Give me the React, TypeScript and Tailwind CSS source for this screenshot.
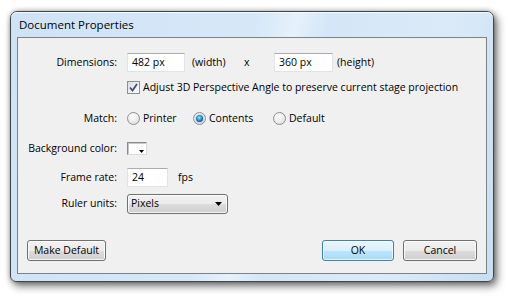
import React from 'react';

const font = { fontFamily: '"Open Sans", "Noto Sans", sans-serif' };

const TextBox: React.FC<{ value: string; w: string }> = ({ value, w }) => (
  <div className={`${w} h-[19px] bg-white border border-[#dfe4ea] border-t-[#abadb3] border-l-[#e2e3ea] pl-[4px] flex items-center text-black`}>
    {value}
  </div>
);

const Radio: React.FC<{ checked?: boolean; label: string; w: string }> = ({ checked, label, w }) => (
  <div className={`${w} flex items-center gap-[3px]`}>
    <div className="w-[13px] h-[13px] rounded-full border border-[#8e8f8f] bg-[radial-gradient(circle_at_40%_35%,#ffffff,#d9d9d9)] flex items-center justify-center">
      {checked && (
        <div className="w-[7px] h-[7px] rounded-full bg-[radial-gradient(circle_at_45%_40%,#9fe3ff,#0d6ea8_60%,#044b79)] shadow-[0_0_2px_#3c9fda]" />
      )}
    </div>
    <span>{label}</span>
  </div>
);

const Button: React.FC<{ label: string; w: string; primary?: boolean }> = ({ label, w, primary }) => (
  <div
    className={`${w} h-[21px] rounded-[3px] border flex items-center justify-center text-black ${
      primary
        ? 'border-[#3c7fb1] bg-[linear-gradient(to_bottom,#eaf6fd_0%,#d9f0fc_50%,#bee6fd_50%,#a7d9f5_100%)] shadow-[inset_0_0_0_1px_rgba(255,255,255,0.7)]'
        : 'border-[#707070] bg-[linear-gradient(to_bottom,#f2f2f2_0%,#ebebeb_50%,#dddddd_50%,#cfcfcf_100%)] shadow-[inset_0_0_0_1px_rgba(255,255,255,0.8)]'
    }`}
  >
    {label}
  </div>
);

export default function App() {
  return (
    <div className="w-[508px] h-[297px] bg-white overflow-hidden text-[10.5px] text-black whitespace-nowrap" style={font}>
      <div className="ml-[10px] mt-[11px] w-[484px] h-[271px] rounded-t-[7px] rounded-b-[6px] border border-[#3f444a] bg-[linear-gradient(105deg,#cfe3f6_0%,#d6e8f8_45%,#e6f1fb_52%,#d4e6f7_58%,#dbeaf8_80%,#c8def2_100%)] shadow-[3px_4px_9px_rgba(0,0,0,0.55),0_0_5px_rgba(0,0,0,0.3)] flex flex-col">
        <div className="h-[25px] pl-[8px] flex items-center text-[11.5px] rounded-t-[6px] shadow-[inset_0_1px_0_rgba(255,255,255,0.8)]">
          Document Properties
        </div>
        <div className="mx-[6px] h-[237px] border border-[#7d8287] bg-[#f0f0f0] pt-[15px] flex flex-col">
          {/* Dimensions */}
          <div className="flex items-center h-[19px]">
            <div className="w-[99px] text-right">Dimensions:</div>
            <div className="w-[10px]" />
            <TextBox value="482 px" w="w-[58px]" />
            <span className="ml-[7px] w-[52px]">(width)</span>
            <span className="w-[30px]">x</span>
            <TextBox value="360 px" w="w-[59px]" />
            <span className="ml-[4px]">(height)</span>
          </div>

          <div className="flex items-center h-[13px] mt-[9px] pl-[109px]">
            <div className="w-[13px] h-[13px] border border-[#8f8f8f] bg-[linear-gradient(135deg,#dcdcdc,#ffffff)] flex items-center justify-center">
              <svg width="9" height="9" viewBox="0 0 9 9">
                <path d="M1 4.5 L3.5 7.5 L8 1" fill="none" stroke="#3b4f8a" strokeWidth="1.8" />
              </svg>
            </div>
            <span className="ml-[3px]">Adjust 3D Perspective Angle to preserve current stage projection</span>
          </div>

          {/* Match */}
          <div className="flex items-center h-[13px] mt-[18px]">
            <div className="w-[99px] text-right">Match:</div>
            <div className="w-[10px]" />
            <Radio label="Printer" w="w-[66px]" />
            <Radio label="Contents" w="w-[80px]" checked />
            <Radio label="Default" w="w-[80px]" />
          </div>

          {/* Background color */}
          <div className="flex items-center h-[13px] mt-[17px]">
            <div className="w-[99px] text-right">Background color:</div>
            <div className="w-[10px]" />
            <div className="relative w-[20px] h-[13px] border border-[#8a8a8a] border-r-[#dcdcdc] border-b-[#dcdcdc] bg-white shadow-[inset_1px_1px_0_#c8c8c8]">
              <svg className="absolute right-[2px] bottom-[1px]" width="5" height="3" viewBox="0 0 5 3">
                <path d="M0 0 H5 L2.5 3 Z" fill="#000" />
              </svg>
            </div>
          </div>

          {/* Frame rate */}
          <div className="flex items-center h-[19px] mt-[13px]">
            <div className="w-[99px] text-right">Frame rate:</div>
            <div className="w-[10px]" />
            <TextBox value="24" w="w-[41px]" />
            <span className="ml-[10px]">fps</span>
          </div>

          {/* Ruler units */}
          <div className="flex items-center h-[20px] mt-[7px]">
            <div className="w-[99px] text-right">Ruler units:</div>
            <div className="w-[10px]" />
            <div className="w-[101px] h-[20px] rounded-[3px] border border-[#707070] bg-[linear-gradient(to_bottom,#f2f2f2_0%,#ebebeb_50%,#dddddd_50%,#cfcfcf_100%)] shadow-[inset_0_0_0_1px_rgba(255,255,255,0.8)] flex items-center pl-[3px] pr-[5px]">
              <span className="flex-1">Pixels</span>
              <svg width="7" height="4" viewBox="0 0 7 4">
                <path d="M0 0 H7 L3.5 4 Z" fill="#000" />
              </svg>
            </div>
          </div>

          {/* Buttons */}
          <div className="flex items-center mt-[26px] pl-[9px] pr-[9px]">
            <Button label="Make Default" w="w-[79px]" />
            <div className="flex-1" />
            <Button label="OK" w="w-[72px]" primary />
            <div className="w-[9px]" />
            <Button label="Cancel" w="w-[74px]" />
          </div>
        </div>
      </div>
    </div>
  );
}
